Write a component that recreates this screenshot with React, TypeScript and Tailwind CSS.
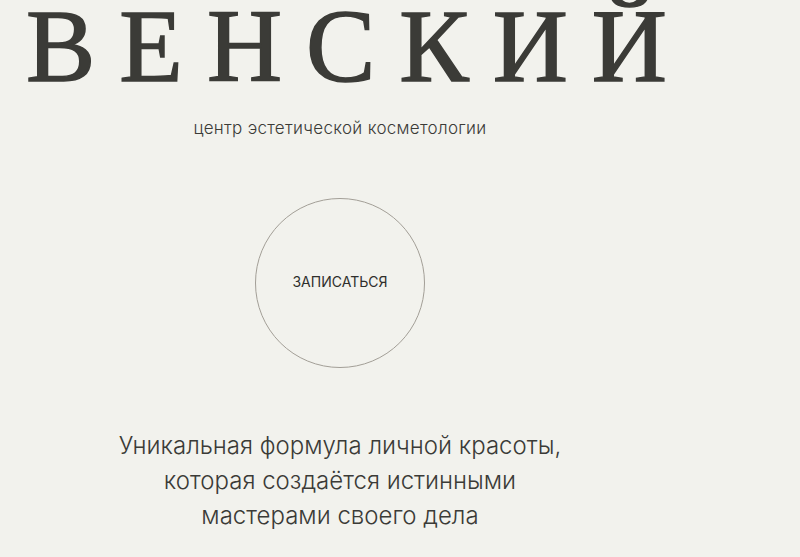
export default function App() {
  return (
    <div className="min-h-[557px] w-full overflow-hidden bg-[#f2f2ed] text-[#3b3b37] font-['Inter','Open_Sans',sans-serif]">
      <div className="flex w-[680px] flex-col items-center">
        <h1 className="self-start whitespace-nowrap pl-[26px] font-['Liberation_Serif',serif] text-[104px] leading-[92px] font-normal tracking-[24px] [-webkit-text-stroke:1.5px_#3b3b37]">
          ВЕНСКИЙ
        </h1>

        <p className="mt-[24px] text-[17px] leading-[24px] font-light tracking-[0.3px]">
          центр эстетической косметологии
        </p>

        <button className="mt-[58px] flex h-[170px] w-[170px] items-center justify-center rounded-full border border-[#a39f97] pb-[3px] text-[14px] text-[#2f2f2c]">
          ЗАПИСАТЬСЯ
        </button>

        <p className="mt-[60px] text-center text-[24px] leading-[35px] font-light">
          Уникальная формула личной красоты,
          <br />
          которая создаётся истинными
          <br />
          мастерами своего дела
        </p>
      </div>
    </div>
  );
}
